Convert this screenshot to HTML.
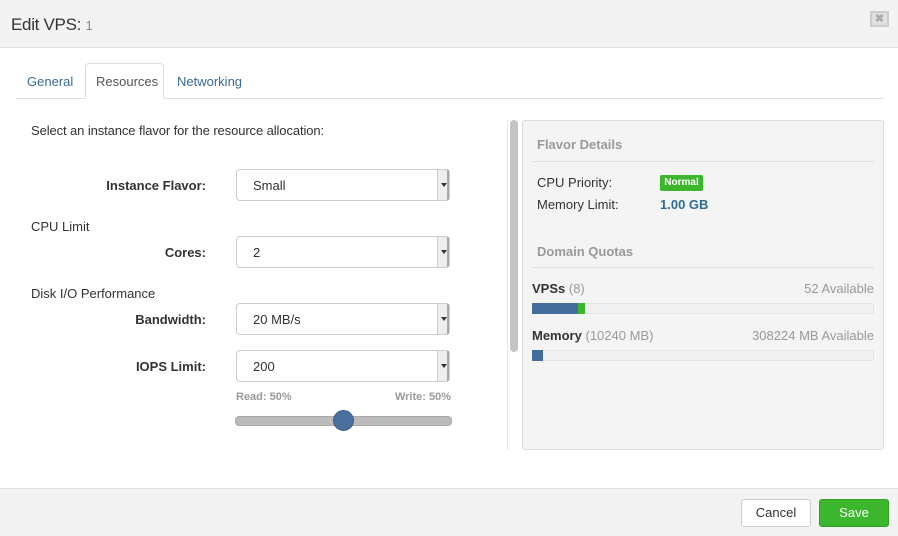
<!DOCTYPE html>
<html><head><style>
*{box-sizing:border-box;margin:0;padding:0}
body{width:898px;height:536px;overflow:hidden;background:#fff;font-family:"Liberation Sans",sans-serif;color:#333;position:relative;font-size:13px}
.abs{position:absolute}
.hdr{left:0;top:0;width:898px;height:48px;background:#f3f3f3;border-bottom:1px solid #e2e2e2}
.ftr{left:0;top:488px;width:898px;height:48px;background:#f3f3f3;border-top:1px solid #e2e2e2}
.lbl{font-weight:bold;font-size:13px;text-align:right;width:190px;left:16px}
.sel{left:236px;width:214px;height:32px;border:1px solid #ccc;border-radius:4px;background:#fff;padding:8px 0 0 16px;font-size:13px}
.sel i{position:absolute;right:0;top:0;width:12px;height:30px;background:#eee;border-left:1px solid #ccc;border-right:2px solid #aaa}
.sel i:after{content:"";position:absolute;left:3px;top:13px;border:3px solid transparent;border-top:4px solid #333}
</style></head><body>
<div class="abs hdr"></div>
<div class="abs" style="left:11px;top:15px;font-size:17px;letter-spacing:-0.3px;color:#333">Edit VPS: <span style="font-size:13px;color:#888">1</span></div>
<div class="abs" style="left:870px;top:11px;width:19px;height:16px;border:2px solid #ccc;background:#e0e0e0;color:#aaa;font-size:11px;text-align:center;line-height:12px;font-weight:bold">✖</div>

<div class="abs" style="left:16px;top:98px;width:868px;height:1px;background:#ddd"></div>
<div class="abs" style="left:85px;top:63px;width:79px;height:36px;border:1px solid #ddd;border-bottom:1px solid #fff;border-radius:4px 4px 0 0;background:#fff"></div>
<div class="abs" style="left:27px;top:74px;color:#3c6a9c">General</div>
<div class="abs" style="left:96px;top:74px;color:#555">Resources</div>
<div class="abs" style="left:177px;top:74px;color:#3c6a9c">Networking</div>

<div class="abs" style="left:31px;top:123px;letter-spacing:-0.1px">Select an instance flavor for the resource allocation:</div>
<div class="abs lbl" style="top:178px">Instance Flavor:</div>
<div class="abs sel" style="top:169px">Small<i></i></div>
<div class="abs" style="left:31px;top:219px">CPU Limit</div>
<div class="abs lbl" style="top:245px">Cores:</div>
<div class="abs sel" style="top:236px">2<i></i></div>
<div class="abs" style="left:31px;top:286px">Disk I/O Performance</div>
<div class="abs lbl" style="top:312px">Bandwidth:</div>
<div class="abs sel" style="top:303px">20 MB/s<i></i></div>
<div class="abs lbl" style="top:359px">IOPS Limit:</div>
<div class="abs sel" style="top:350px">200<i></i></div>
<div class="abs" style="left:236px;top:391px;font-size:11px;font-weight:bold;color:#999">Read: 50%</div>
<div class="abs" style="left:380px;top:391px;width:71px;text-align:right;font-size:11px;font-weight:bold;color:#999">Write: 50%</div>
<div class="abs" style="left:235px;top:416px;width:217px;height:10px;background:#bbb;border:1px solid #aaa;border-radius:4px"></div>
<div class="abs" style="left:333px;top:410px;width:21px;height:21px;border-radius:50%;background:#4a6f9c;border:1px solid #3d5f88"></div>

<div class="abs" style="left:507px;top:120px;width:1px;height:330px;background:#e6e6e6"></div>
<div class="abs" style="left:510px;top:120px;width:8px;height:232px;border-radius:4px;background:#c4c4c4"></div>
<div class="abs" style="left:522px;top:120px;width:362px;height:330px;background:#f4f4f4;border:1px solid #ddd;border-radius:3px"></div>
<div class="abs" style="left:537px;top:137px;font-weight:bold;color:#999">Flavor Details</div>
<div class="abs" style="left:532px;top:161px;width:342px;height:1px;background:#ddd"></div>
<div class="abs" style="left:537px;top:175px">CPU Priority:</div>
<div class="abs" style="left:660px;top:175px;width:43px;height:16px;background:#3cb62c;border-radius:2px;color:#fff;font-size:10px;font-weight:bold;text-align:center;line-height:16px">Normal</div>
<div class="abs" style="left:537px;top:197px">Memory Limit:</div>
<div class="abs" style="left:660px;top:197px;font-weight:bold;color:#2f6b94">1.00 GB</div>
<div class="abs" style="left:537px;top:244px;font-weight:bold;color:#999">Domain Quotas</div>
<div class="abs" style="left:532px;top:267px;width:342px;height:1px;background:#ddd"></div>
<div class="abs" style="left:532px;top:281px"><b>VPSs</b> <span style="color:#999">(8)</span></div>
<div class="abs" style="left:700px;top:281px;width:174px;text-align:right;color:#999">52 Available</div>
<div class="abs" style="left:532px;top:303px;width:342px;height:11px;background:#f0f0f0;border:1px solid #e4e4e4;border-radius:2px"></div>
<div class="abs" style="left:532px;top:303px;width:46px;height:11px;background:#446d9b"></div>
<div class="abs" style="left:578px;top:303px;width:7px;height:11px;background:#3cb62c"></div>
<div class="abs" style="left:532px;top:328px"><b>Memory</b> <span style="color:#999">(10240 MB)</span></div>
<div class="abs" style="left:650px;top:328px;width:224px;text-align:right;color:#999">308224 MB Available</div>
<div class="abs" style="left:532px;top:350px;width:342px;height:11px;background:#f0f0f0;border:1px solid #e4e4e4;border-radius:2px"></div>
<div class="abs" style="left:532px;top:350px;width:11px;height:11px;background:#446d9b"></div>

<div class="abs ftr"></div>
<div class="abs" style="left:741px;top:499px;width:70px;height:28px;background:#fff;border:1px solid #ccc;border-radius:3px;text-align:center;line-height:26px">Cancel</div>
<div class="abs" style="left:819px;top:499px;width:70px;height:28px;background:#3cb62c;border:1px solid #33a025;border-radius:3px;color:#fff;text-align:center;line-height:26px">Save</div>
</body></html>
